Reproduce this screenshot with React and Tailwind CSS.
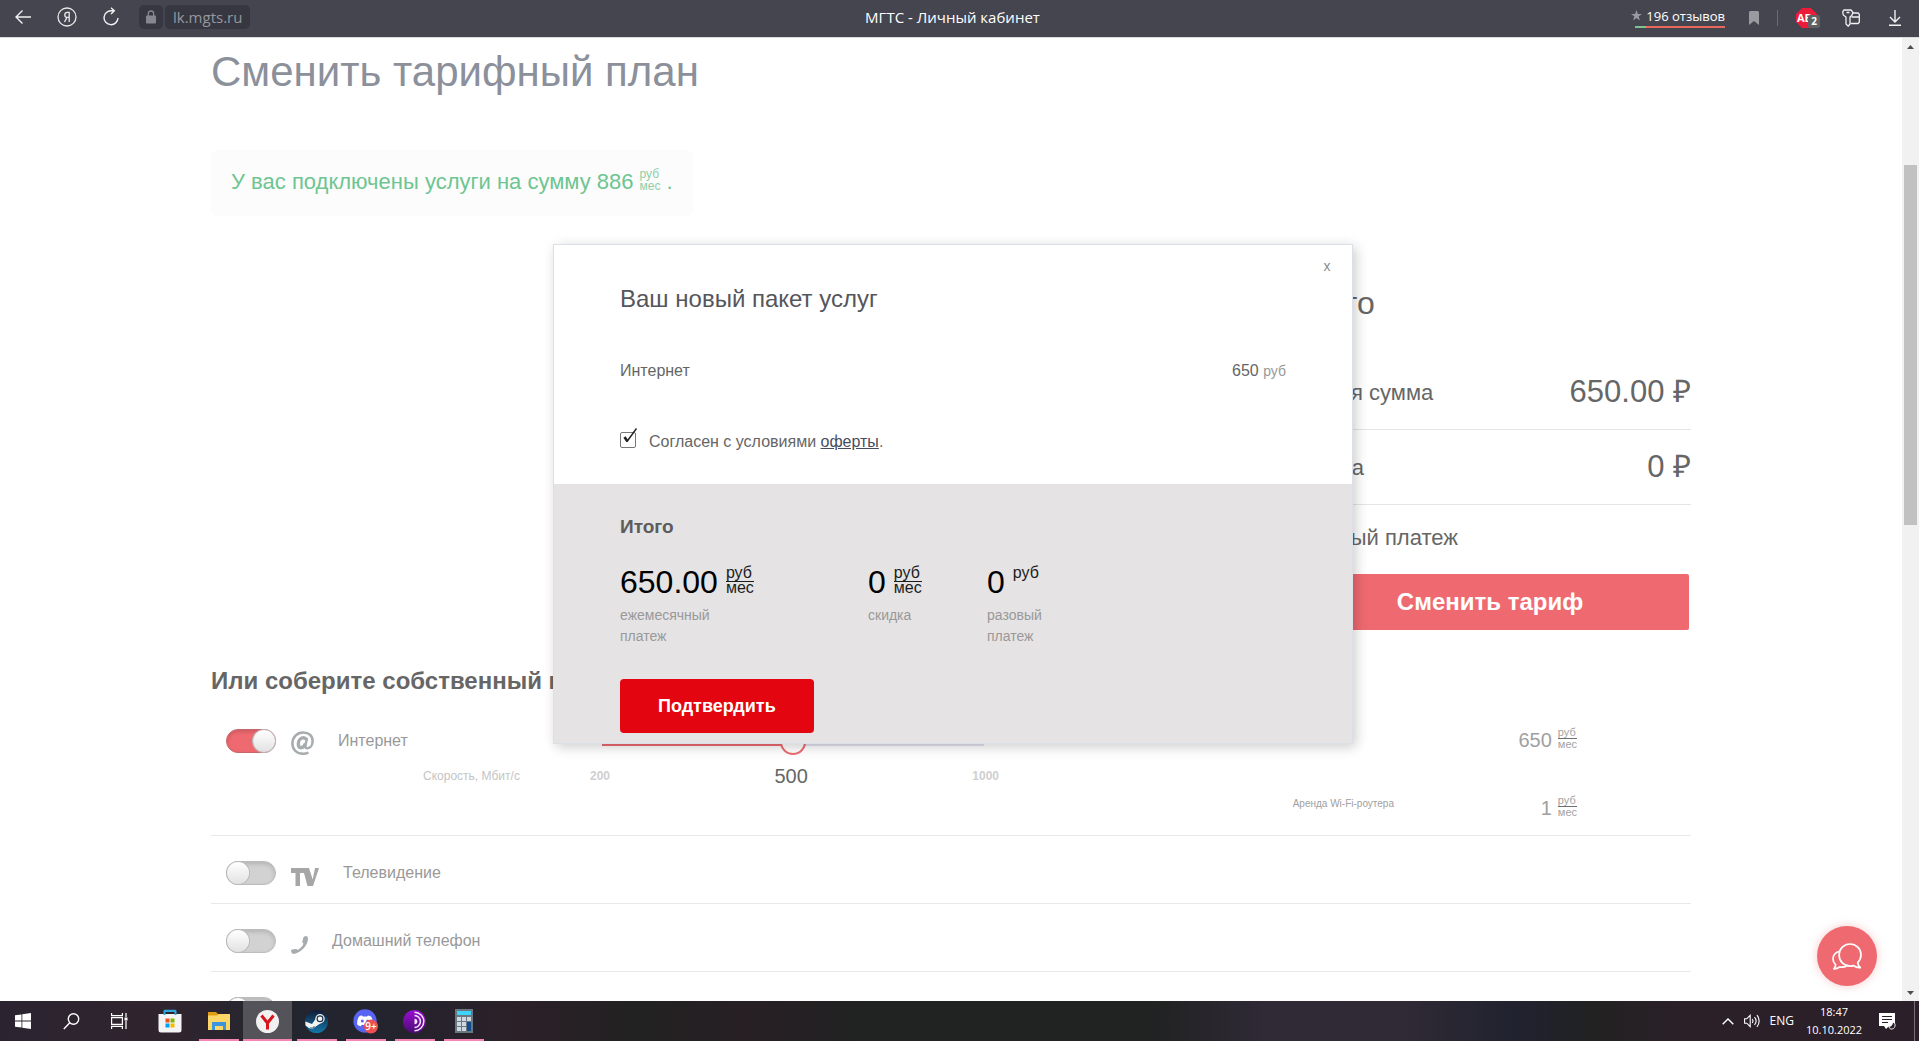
import { useState } from "react";

/* ---------- Browser bar ---------- */

function IconButton({ label, className = "", children }) {
  return (
    <button type="button" aria-label={label} className={`flex shrink-0 items-center justify-center ${className}`}>
      {children}
    </button>
  );
}

function BrowserBar() {
  return (
    <header className="grid h-[37px] shrink-0 grid-cols-[1fr_auto_1fr] items-center bg-[#45454f] pr-3.5 font-['Open_Sans','Noto_Sans',sans-serif] text-white">
      <div className="flex items-center pb-[3px] pl-3">
        <IconButton label="Назад" className="size-[22px]">
          <svg width="18" height="16" viewBox="0 0 18 16" fill="none" stroke="#f1f1f3" strokeWidth="1.4">
            <path d="M17 8H2M8.5 1.5 2 8l6.500 6.500" />
          </svg>
        </IconButton>
        <IconButton label="Яндекс" className="ml-[22px] size-[22px]">
          <svg width="20" height="20" viewBox="0 0 20 20" fill="none" stroke="#e8e8ea" strokeWidth="1.300">
            <circle cx="10" cy="10" r="9" />
            <path d="M12.200 15V5.300h-1.700c-1.700 0-2.700 1-2.700 2.600s1 2.500 2.700 2.500h1.700M10 10.400 7.500 15" />
          </svg>
        </IconButton>
        <IconButton label="Обновить" className="ml-[22px] size-[22px]">
          <svg width="18" height="20" viewBox="0 0 18 20" fill="none" stroke="#f1f1f3" strokeWidth="1.400">
            <path d="M16 11a7 7 0 1 1-6.500-7.300H12M9 .8l3.300 2.900L9 7" />
          </svg>
        </IconButton>
        <button type="button" aria-label="Сведения о сайте" className="ml-[17px] flex h-6 w-6 items-center justify-center rounded-[5px] bg-[#363741]">
          <svg width="12" height="14" viewBox="0 0 12 14">
            <rect x="1" y="5.500" width="10" height="8" rx="1" fill="#858790" />
            <path d="M3.300 6V3.700a2.700 2.700 0 0 1 5.400 0V6" fill="none" stroke="#858790" strokeWidth="1.300" />
          </svg>
        </button>
        <button type="button" className="ml-0.5 h-6 rounded-[5px] bg-[#363741] px-2 text-[15px] leading-6 text-[#96979f]">
          lk.mgts.ru
        </button>
      </div>
      <h1 className="pb-1 text-[15px] leading-5">МГТС - Личный кабинет</h1>
      <div className="flex items-center justify-end pr-[3px] pb-0.5">
        <a href="#reviews" className="mt-[-2px] flex w-[90px] flex-col">
          <span className="flex items-center justify-end gap-1 text-[13px] leading-5 font-medium">
            <svg width="11" height="11" viewBox="0 0 24 24" fill="#9a9aa1" className="shrink-0">
              <path d="m12 0 3 8.500h9l-7.300 5.400 2.700 8.900L12 17.400l-7.400 5.400 2.700-8.900L0 8.500h9z" />
            </svg>
            <span className="whitespace-nowrap">196 отзывов</span>
          </span>
          <span className="flex h-0.5">
            <span className="w-[11px] bg-[#7cc48f]" />
            <span className="grow bg-[#e8685c]" />
          </span>
        </a>
        <IconButton label="Закладка" className="ml-6">
          <svg width="10" height="14" viewBox="0 0 10 14" fill="#9a9aa1">
            <path d="M1 0h8l1 1v13L5 10 0 14V1z" />
          </svg>
        </IconButton>
        <span className="ml-[18px] h-4 w-px bg-[#6b6b74]" />
        <IconButton label="Adblock" className="relative ml-[18px]">
          <svg width="21" height="20" viewBox="0 0 21 20">
            <path d="M6.200 0h8.600L21 6v8l-6.200 6H6.200L0 14V6z" fill="#ed1b3a" />
            <text x="1" y="14" fontSize="11" fontWeight="700" fill="#fff" fontFamily="Open Sans">
              AB
            </text>
          </svg>
          <span className="absolute top-[7px] left-3 h-[13px] w-3 rounded-[2px] bg-[#5e6063] text-center text-[10px] leading-[13px] font-bold">2</span>
        </IconButton>
        <IconButton label="Пароли и карты" className="ml-[25px]">
          <svg width="18" height="18" viewBox="0 0 18 18" fill="none" stroke="#f1f1f3" strokeWidth="1.300">
            <path d="M2 1h7l2 2.300-1.300 3.200L8 8v7l-1.800 2.200L4 15V8L1.300 6 .7 3zM4.500 3.500h3" />
            <path d="M10.500 4H16l1.300 1.200v8L16 14.500H8.500M9.500 8h7.800" />
          </svg>
        </IconButton>
        <IconButton label="Загрузки" className="ml-7">
          <svg width="14" height="16" viewBox="0 0 14 16" fill="none" stroke="#f1f1f3" strokeWidth="1.400">
            <path d="M7 0v12M2 7l5 5 5-5M1 15.200h12" />
          </svg>
        </IconButton>
      </div>
    </header>
  );
}

/* ---------- Page ---------- */

const fractionStyles = {
  tiny: { box: "mt-[-3px] text-[11px] text-[#a3a3a3]", top: "leading-3 border-b border-[#6f6f6f]", bottom: "leading-[10px]" },
  green: { box: "mt-[-3px] text-xs text-[#8dcfa9]", top: "leading-3", bottom: "leading-3" },
  large: { box: "text-base text-[#1c1c1c]", top: "leading-[17px] border-b border-[#1c1c1c]", bottom: "leading-3" },
};

function PerMonth({ kind, once = false }) {
  const s = fractionStyles[kind];
  return (
    <span className={`flex flex-col text-left ${s.box}`}>
      <span className={once ? "leading-[17px]" : s.top}>руб</span>
      {!once && <span className={s.bottom}>мес</span>}
    </span>
  );
}

function Toggle({ label, defaultChecked = false }) {
  const [on, setOn] = useState(defaultChecked);
  return (
    <input
      type="checkbox"
      role="switch"
      aria-label={label}
      checked={on}
      onChange={() => setOn(!on)}
      className="h-6 w-[50px] shrink-0 appearance-none rounded-full border border-[#bdbdbd] bg-[#d2d2d2] shadow-[inset_0_2px_4px_rgba(0,0,0,0.15)] before:block before:h-[22px] before:w-[22px] before:rounded-full before:bg-linear-to-b before:from-white before:to-[#e2e2e2] before:shadow-[0_0_0_1px_#b9b9b9] checked:border-[#c7666c] checked:bg-[#ef6a70] checked:before:ml-[26px]"
    />
  );
}

function AtIcon() {
  return (
    <svg width="23" height="24" viewBox="0 0 23 24" className="mt-1" fill="none" stroke="#a7acae">
      <path d="M17.500 21.500c-1.500.9-3.500 1.300-5.500 1.300C5.500 22.800 1.400 18.500 1.400 12.500 1.400 6 6 1.400 12.300 1.400c5.600 0 9.300 3.500 9.300 8.600 0 4.400-2.400 7.200-5.200 7.200-1.700 0-2.300-1-2-2.700L16 7" strokeWidth="2.500" />
      <path d="M15.200 8.500c-.6-1.200-1.700-1.700-2.900-1.700-3 0-5 2.900-5 6.200 0 2.200 1 3.700 2.700 3.700 2 0 3.700-1.500 4.500-4.200" strokeWidth="3.400" />
    </svg>
  );
}

function TvIcon() {
  return (
    <svg width="28" height="18" viewBox="0 0 28 18" className="mt-2" fill="#a6a6a6">
      <path d="M0 0h18l3.700 11.500L24 0h4l-6 18h-5.500L13 5H9v13H4.500V5H0z" />
    </svg>
  );
}

function PhoneIcon() {
  return (
    <svg width="17" height="18" viewBox="0 0 17 18" className="mt-[7px]" fill="#a7acae">
      <path d="M14.200.2c1.500-.4 2.800.6 2.800 2.400 0 6.500-6.300 13.500-13 15.200-1.500.4-2.800 0-3.400-1-.9-1.500-.7-3 .7-3.300l3.400-.5c1-.1 1.500.2 2 .9 2.500-1.200 4.700-3.600 5.800-6.200-.9-.5-1.400-1-1.200-2L12.200 2c.2-1 .9-1.600 2-1.800z" />
    </svg>
  );
}

function ServiceName({ icon, name, checked }) {
  return (
    <div className="flex h-6 items-center pl-[15px] text-base text-[#999]">
      <Toggle label={name} defaultChecked={checked} />
      <span className="ml-[15px] flex shrink-0 items-center">{icon}</span>
      <span className="ml-6 whitespace-nowrap">{name}</span>
    </div>
  );
}

function ServiceRow({ icon, name }) {
  return (
    <div className="h-[68px] shrink-0 border-b border-[#e8e8e8] pt-[25px]">
      <ServiceName icon={icon} name={name} />
    </div>
  );
}

function InternetRow() {
  return (
    <div className="flex h-[139px] shrink-0 border-b border-[#e8e8e8] pt-8">
      <div className="w-[212px] shrink-0">
        <ServiceName icon={<AtIcon />} name="Интернет" checked />
      </div>
      <label htmlFor="speed" className="mt-[35px] h-6 w-[167px] shrink-0 text-xs leading-6 text-[#c4c4c4]">
        Скорость, Мбит/с
      </label>
      <div className="w-[409px] shrink-0">
        <div className="flex pr-[15px] pl-3">
          <input
            id="speed"
            type="range"
            min="0"
            max="2"
            defaultValue="1"
            className="h-[26px] w-full appearance-none bg-transparent [&::-webkit-slider-runnable-track]:h-2 [&::-webkit-slider-runnable-track]:bg-linear-to-r [&::-webkit-slider-runnable-track]:from-[#ef6a70] [&::-webkit-slider-runnable-track]:from-50% [&::-webkit-slider-runnable-track]:to-[#e3e3ee] [&::-webkit-slider-runnable-track]:to-50% [&::-webkit-slider-thumb]:mt-[-9px] [&::-webkit-slider-thumb]:h-[26px] [&::-webkit-slider-thumb]:w-[26px] [&::-webkit-slider-thumb]:appearance-none [&::-webkit-slider-thumb]:rounded-full [&::-webkit-slider-thumb]:border-2 [&::-webkit-slider-thumb]:border-[#ef6a70] [&::-webkit-slider-thumb]:bg-white"
          />
        </div>
        <div className="mt-[9px] flex h-6 items-center justify-between text-xs font-bold text-[#cfcfcf]">
          <span>200</span>
          <span className="text-xl font-normal text-[#666]">500</span>
          <span>1000</span>
        </div>
      </div>
      <div className="flex grow flex-col pr-[114px] text-[20px] leading-[22px] text-[#a0a0a0]">
        <div className="flex justify-end gap-1.5">
          <span>650</span>
          <PerMonth kind="tiny" />
        </div>
        <div className="mt-[46px] flex justify-end gap-1.5">
          <span className="w-[255px] text-[10px] leading-[14px]">Аренда Wi-Fi-роутера</span>
          <span className="ml-[-13px]">1</span>
          <PerMonth kind="tiny" />
        </div>
      </div>
    </div>
  );
}

function Summary() {
  return (
    <section className="mt-[69px] flex w-[400px] flex-col self-end text-[22px] text-[#666]">
      <h3 className="text-[32px] leading-9">Итого</h3>
      <dl className="mt-[34px]">
        <div className="flex h-[75px] items-center justify-between border-b border-[#e5e5e5]">
          <dt>Общая сумма</dt>
          <dd className="text-[31px]">650.00 ₽</dd>
        </div>
        <div className="flex h-[75px] items-center justify-between border-b border-[#e5e5e5]">
          <dt>Скидка</dt>
          <dd className="text-[31px]">0 ₽</dd>
        </div>
      </dl>
      <p className="mt-[18px] leading-[30px]">Разовый платеж</p>
      <button type="button" className="mt-[21px] mr-0.5 h-14 rounded-xs bg-[#ef6a70] text-2xl font-bold text-white">
        Сменить тариф
      </button>
    </section>
  );
}

function TariffPage() {
  return (
    <main className="mx-auto flex w-full max-w-[1480px] flex-col pt-2">
      <h2 className="text-[42px] leading-[52px] text-[#8b909b]">Сменить тарифный план</h2>
      <p className="mt-[52px] flex h-[66px] items-center self-start rounded-md bg-[#fcfcfc] px-5 pb-1 text-[22px] text-[#6ec591]">
        У вас подключены услуги на сумму 886
        <span className="mx-1.5">
          <PerMonth kind="green" />
        </span>
        .
      </p>
      <Summary />
      <h3 className="mt-[35px] text-2xl font-bold text-[#666]">Или соберите собственный пакет</h3>
      <InternetRow />
      <ServiceRow icon={<TvIcon />} name="Телевидение" />
      <ServiceRow icon={<PhoneIcon />} name="Домашний телефон" />
      <div className="flex pt-[25px] pl-[15px]">
        <Toggle label="Мобильная связь" />
      </div>
    </main>
  );
}

/* ---------- Order dialog ---------- */

function Total({ value, once, caption, className = "" }) {
  return (
    <div className={className}>
      <div className="flex h-9 gap-2">
        <span className="text-[32px] leading-9 text-black">{value}</span>
        <PerMonth kind="large" once={once} />
      </div>
      <div className="mt-[5px] text-sm leading-[21px] whitespace-pre-line text-[#999]">{caption}</div>
    </div>
  );
}

function OrderDialog() {
  return (
    <div role="dialog" aria-labelledby="order-title" className="relative flex w-[800px] flex-col border border-[#dbe0e6] bg-white shadow-[3px_3px_12px_rgba(0,0,0,0.2)]">
      <button type="button" aria-label="Закрыть" className="absolute top-3 right-4 size-[18px] text-sm leading-[18px] text-[#8c8c8c]">
        x
      </button>
      <div className="flex flex-col px-[66px] pt-[38px] pb-[30px] text-base leading-6 text-[#666]">
        <h2 id="order-title" className="text-2xl leading-8 text-[#55565c]">
          Ваш новый пакет услуг
        </h2>
        <div className="mt-11 flex justify-between">
          <span>Интернет</span>
          <span>
            650 <span className="text-sm text-[#999]">руб</span>
          </span>
        </div>
        <div className="mt-[47px] flex">
          <input id="offer" type="checkbox" defaultChecked className="peer mt-[2px] size-4 shrink-0 appearance-none rounded-[2px] border border-[#777] bg-white" />
          <svg width="14" height="16" viewBox="0 0 14 16" className="pointer-events-none invisible -mt-0.5 -ml-[13px] peer-checked:visible" fill="none" stroke="#222">
            <path d="m1.500 9 3 4.500" strokeWidth="2.600" />
            <path d="M4 13.500 13.500.5" strokeWidth="1.500" />
          </svg>
          <label htmlFor="offer" className="ml-3">
            Согласен с условиями{" "}
            <a href="#offer-terms" className="text-[#474c5e] underline">
              оферты
            </a>
            .
          </label>
        </div>
      </div>
      <div className="flex flex-col items-start bg-[#e5e3e4] px-[66px] pt-[31px] pb-2.5">
        <h3 className="text-[19px] leading-6 font-bold text-[#5c5c5c]">Итого</h3>
        <div className="mt-[25px] flex">
          <Total value="650.00" caption={"ежемесячный\nплатеж"} className="w-[248px]" />
          <Total value="0" caption="скидка" className="w-[119px]" />
          <Total value="0" once caption={"разовый\nплатеж"} />
        </div>
        <button type="button" className="mt-8 h-[54px] rounded bg-[#e30611] px-[38px] text-lg font-bold text-white">
          Подтвердить
        </button>
      </div>
    </div>
  );
}

function ChatButton() {
  return (
    <button type="button" aria-label="Чат" className="absolute right-[42px] bottom-[15px] flex size-[60px] items-center justify-center rounded-full bg-[#ef6a70] shadow-[0_0_10px_rgba(239,106,112,0.35)]">
      <svg width="30" height="27" viewBox="0 0 30 27" fill="none" stroke="#fff" strokeWidth="1.700" strokeLinejoin="round">
        <path d="M18 1c6 0 11 4.800 11 10.800 0 3.200-1.200 5.800-3.300 7.800.2 2 1 3.500 2.600 5-2.600.2-4.800-.4-6.600-2-1.200.4-2.400.5-3.700.5-6 0-10.900-4.900-10.900-11.200C7.100 5.900 12 1 18 1z" />
        <path d="M7.600 8.300C3.500 9.500 1 12.400 1 16c0 2.300 1 4.300 2.600 5.700-.1 1.600-.6 3-1.700 4.200 2.300 0 4.200-.7 5.700-1.900 3 .5 5.600 0 7.700-1.500" />
      </svg>
    </button>
  );
}

function Scrollbar() {
  return (
    <div aria-hidden="true" className="flex w-[17px] shrink-0 flex-col items-center bg-[#f1f1f1]">
      <span className="flex h-[17px] items-center">
        <svg width="7" height="4" viewBox="0 0 7 4" fill="#4d4d4d">
          <path d="M3.500 0 7 4H0z" />
        </svg>
      </span>
      <span className="mt-[110px] h-[360px] w-[13px] bg-[#c1c1c1]" />
      <span className="mt-auto flex h-[17px] items-center">
        <svg width="7" height="4" viewBox="0 0 7 4" fill="#4d4d4d">
          <path d="M0 0h7L3.500 4z" />
        </svg>
      </span>
    </div>
  );
}

/* ---------- Taskbar ---------- */

const apps = [
  {
    name: "Microsoft Store",
    icon: (
      <svg width="24" height="24" viewBox="0 0 24 24">
        <path d="M.5 5h23v16q0 2.500-2.500 2.500H3Q.5 23.500.5 21z" fill="#f4f4f4" />
        <path d="M5.500 6V2.200Q5.500.8 7 .8h10q1.500 0 1.500 1.400V6h-2V3h-9v3z" fill="#2fa8e0" />
        <path d="M7.500 9.500h4v4h-4z" fill="#f05022" />
        <path d="M12.500 9.500h4v4h-4z" fill="#7db900" />
        <path d="M7.500 14.500h4v4h-4z" fill="#00a3ee" />
        <path d="M12.500 14.500h4v4h-4z" fill="#feb800" />
      </svg>
    ),
  },
  {
    name: "Проводник",
    running: true,
    icon: (
      <svg width="22" height="20" viewBox="0 0 22 20">
        <path d="M0 1h8l2 2h12v15H0z" fill="#e09c14" />
        <path d="M0 4.500h9l1.500-1.500H22v16H0z" fill="#fcd667" />
        <path d="M4 11h14v8h-3v-4H7v4H4z" fill="#3b94dc" />
      </svg>
    ),
  },
  {
    name: "Яндекс Браузер",
    running: true,
    active: true,
    icon: (
      <svg width="23" height="23" viewBox="0 0 23 23">
        <circle cx="11.500" cy="11.500" r="11.500" fill="#f1f1f1" />
        <path d="m5.500 5.500 6 7.500 6-7.500M11.500 12v7.500" fill="none" stroke="#d8141c" strokeWidth="3" />
      </svg>
    ),
  },
  {
    name: "Steam",
    running: true,
    icon: (
      <svg width="23" height="23" viewBox="0 0 23 23">
        <defs>
          <linearGradient id="steam" x1="0" y1="0" x2="0" y2="1">
            <stop offset="0" stopColor="#101a34" />
            <stop offset="1" stopColor="#1377ab" />
          </linearGradient>
        </defs>
        <circle cx="11.500" cy="11.500" r="11.500" fill="url(#steam)" />
        <path d="M.3 11.500 7 14l4-5.500 5 4.500-6 4-2.500 2-3.500-1-3.500-2.500z" fill="#f3f3f3" />
        <circle cx="15" cy="8.800" r="4.700" fill="#f3f3f3" />
        <circle cx="15" cy="8.800" r="2.900" fill="#f3f3f3" stroke="#22324a" strokeWidth="1.200" />
        <path d="M5.500 17.500c1.500 1.200 3.500.4 3.700-1.300" fill="none" stroke="#22506f" />
      </svg>
    ),
  },
  {
    name: "Discord",
    running: true,
    icon: (
      <svg width="26" height="25" viewBox="0 0 26 25">
        <circle cx="12" cy="12" r="11.700" fill="#5865f2" />
        <path d="M8 6.500 6 7.500c-1.500 2.500-2 5-1.800 8 1.200 1 2.300 1.500 3.600 1.800l1-1.500c2 .5 4.400.5 6.400 0l1 1.500c1.300-.3 2.400-.8 3.600-1.800.2-3-.3-5.500-1.800-8l-3-1-.8 1h-4.400l-.8-1z" fill="#fff" />
        <circle cx="9.300" cy="12" r="1.500" fill="#5865f2" />
        <circle cx="14.700" cy="12" r="1.500" fill="#5865f2" />
        <circle cx="18" cy="17.500" r="7" fill="#ed5050" />
        <text x="18" y="21" fontSize="10" fontWeight="600" fill="#fff" textAnchor="middle" fontFamily="Open Sans">
          9+
        </text>
      </svg>
    ),
  },
  {
    name: "Tor Browser",
    running: true,
    icon: (
      <svg width="23" height="23" viewBox="0 0 23 23">
        <defs>
          <linearGradient id="tor" x1="0" y1="0" x2="0" y2="1">
            <stop offset="0" stopColor="#9a0fd0" />
            <stop offset="1" stopColor="#4b0b74" />
          </linearGradient>
        </defs>
        <circle cx="11.500" cy="11.500" r="11.500" fill="url(#tor)" />
        <path d="M11.500 2.200a9.300 9.300 0 0 1 0 18.600M11.500 5.600a5.900 5.900 0 0 1 0 11.800" fill="none" stroke="#f6e6fb" strokeWidth="1.500" />
        <path d="M11.500 8.700a2.800 2.800 0 0 1 0 5.600z" fill="#f6e6fb" />
      </svg>
    ),
  },
  {
    name: "Калькулятор",
    running: true,
    icon: (
      <svg width="18" height="24" viewBox="0 0 18 24">
        <path d="M0 0h18v24H0z" fill="#6b7780" />
        <path d="M2 2h14v4H2z" fill="#3fd4fb" />
        <path d="M2 8h4v4H2zm5 0h4v4H7zm5 0h4v4h-4zM2 13h4v4H2zm5 0h4v4H7zM2 18h4v4H2zm5 0h4v4H7z" fill="#cfd8df" />
        <path d="M12 13h4v9h-4z" fill="#0f4d8f" />
      </svg>
    ),
  },
];

function Taskbar() {
  return (
    <footer className="flex h-10 shrink-0 bg-[linear-gradient(90deg,#2b2430,#30242e_9%,#24262f_14%,#23242e_20%,#2b2028_27%,#222222_33%,#271f24_39%,#212222_45%,#212222_60%,#2f2a36_66%,#302a35_73%,#20222f_79%,#222222_83%,#2b2028_88%,#2b2029)] font-['Open_Sans','Noto_Sans',sans-serif] text-white">
      <button type="button" aria-label="Пуск" className="flex w-12 items-center justify-center">
        <svg width="16" height="16" viewBox="0 0 16 16" fill="#fff" className="-ml-0.5">
          <path d="M0 2.300 6.500 1.400v6.200H0zM7.300 1.300 16 0v7.600H7.300zM0 8.400h6.500v6.200L0 13.700zM7.300 8.400H16V16l-8.700-1.300z" />
        </svg>
      </button>
      <button type="button" aria-label="Поиск" className="flex w-12 items-center justify-center">
        <svg width="17" height="17" viewBox="0 0 17 17" fill="none" stroke="#fff" strokeWidth="1.400" className="-ml-0.5">
          <circle cx="10.500" cy="6" r="5.200" />
          <path d="M6.800 9.800.8 16" />
        </svg>
      </button>
      <button type="button" aria-label="Представление задач" className="mr-px flex w-12 items-center justify-center">
        <svg width="17" height="16" viewBox="0 0 17 16" fill="none" stroke="#fff" strokeWidth="1.200" className="-ml-0.5">
          <path d="M.6 0v2.600h10.800V0M.6 16v-2.600h10.800V16M.6 4.600h10.800v6.800H.6zM15 0v4M15 8v8" />
          <path d="M13.500 4.500h3v3h-3z" fill="#fff" stroke="none" />
        </svg>
      </button>
      {apps.map((app) => (
        <button
          key={app.name}
          type="button"
          aria-label={app.name}
          className={`flex w-[49px] flex-col items-center ${app.active ? "bg-[#55535a]" : ""}`}
        >
          <span className="flex h-[38px] items-center pt-0.5">{app.icon}</span>
          {app.running && <span className={`h-0.5 bg-[#f586b4] ${app.active ? "w-full" : "w-10"}`} />}
        </button>
      ))}
      <div className="ml-auto flex items-center text-xs">
        <button type="button" aria-label="Скрытые значки">
          <svg width="12" height="7" viewBox="0 0 12 7" fill="none" stroke="#fff" strokeWidth="1.400">
            <path d="m.7 6.300 5.300-5.300 5.300 5.300" />
          </svg>
        </button>
        <button type="button" aria-label="Громкость" className="ml-2.5">
          <svg width="17" height="14" viewBox="0 0 17 14" fill="none" stroke="#fff" strokeWidth="1.100">
            <path d="M.6 4.800h2.200L6.200 1.300v11.400L2.800 9.200H.6zM8.200 5c.9 1.200.9 2.800 0 4M10.500 3.200c1.900 2.200 1.900 5.400 0 7.600M12.900 1.200c3 3.300 3 8.300 0 11.600" />
          </svg>
        </button>
        <button type="button" className="ml-[9px]">
          ENG
        </button>
        <button type="button" className="ml-3 flex w-[56px] flex-col items-center text-[11px] leading-[18px]">
          <span>18:47</span>
          <span>10.10.2022</span>
        </button>
        <button type="button" aria-label="Уведомления" className="ml-[17px]">
          <svg width="17" height="17" viewBox="0 0 17 17">
            <path d="M0 0h16v13h-6l-3 3-2-3H0z" fill="#fff" />
            <path d="M3 3.500h10M3 6.500h10M3 9.500h6" stroke="#2b2029" strokeWidth="1.200" />
            <path d="M9.500 13.500c2.500.3 4-1.500 4-4.500 2 .7 3 2 2.500 4.200s-2.500 3.300-4.500 2.800z" fill="#2b2029" stroke="#fff" strokeWidth=".9" />
          </svg>
        </button>
        <span className="ml-[18px] h-10 w-px bg-[#77707a]" />
        <span className="w-1" />
      </div>
    </footer>
  );
}

export default function App() {
  return (
    <div className="flex h-screen flex-col overflow-hidden bg-white font-['Liberation_Sans',Arial,sans-serif]">
      <BrowserBar />
      <div className="relative flex min-h-0 grow overflow-hidden border-t border-[#dcdcde]">
        <div className="min-w-0 grow overflow-hidden">
          <TariffPage />
        </div>
        <Scrollbar />
        <div className="pointer-events-none absolute inset-0 flex items-start justify-center pt-[206px] pr-[13px] *:pointer-events-auto">
          <OrderDialog />
          <ChatButton />
        </div>
      </div>
      <Taskbar />
    </div>
  );
}
